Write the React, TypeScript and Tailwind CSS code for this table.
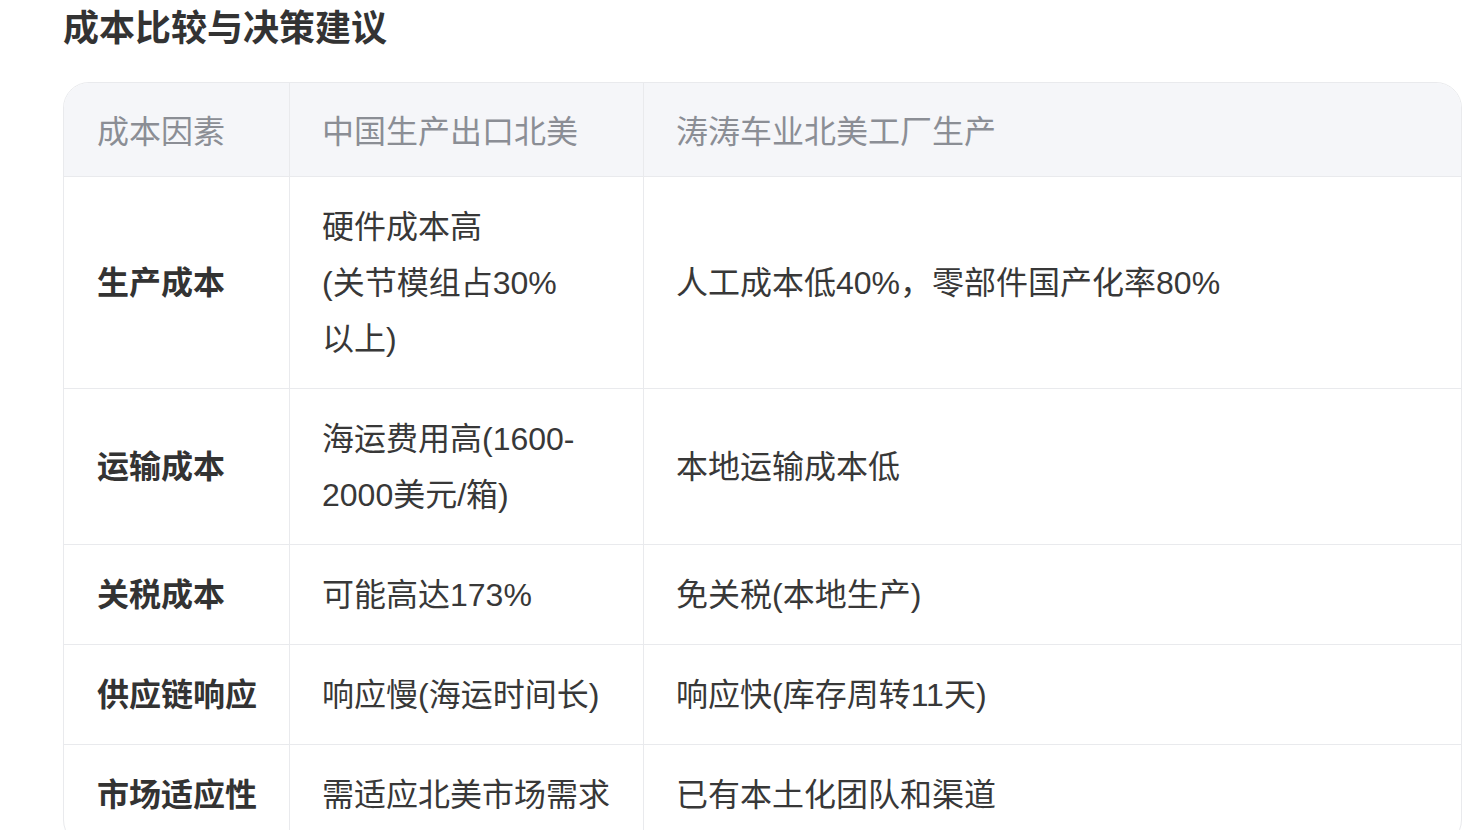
const rows = [
  {
    factor: "生产成本",
    china: (
      <>
        硬件成本高
        <br />
        (关节模组占30%
        <br />
        以上)
      </>
    ),
    local: "人工成本低40%，零部件国产化率80%",
  },
  {
    factor: "运输成本",
    china: "海运费用高(1600-2000美元/箱)",
    local: "本地运输成本低",
  },
  { factor: "关税成本", china: "可能高达173%", local: "免关税(本地生产)" },
  { factor: "供应链响应", china: "响应慢(海运时间长)", local: "响应快(库存周转11天)" },
  { factor: "市场适应性", china: "需适应北美市场需求", local: "已有本土化团队和渠道" },
];

const App = () => {
  return (
    <div
      className="min-h-screen bg-white pl-[63px] pr-[19px] text-[#333333]"
      style={{ fontFamily: '"Liberation Sans", "Noto Sans CJK SC", sans-serif' }}
    >
      <h2 className="pt-[4px] text-[36px] font-bold leading-[50px] text-[#333333]">
        成本比较与决策建议
      </h2>

      <div className="mt-[28px] overflow-hidden rounded-[26px] border border-[#e9eaed] bg-white">
        <div className="grid grid-cols-[226px_354px_1fr] text-[32px] leading-[56px]">
          <div className="border-b border-r border-[#e9eaed] bg-[#f5f6f9] pl-[33px] pt-[21px] pb-[16px] text-[#8b8e95]">
            成本因素
          </div>
          <div className="border-b border-r border-[#e9eaed] bg-[#f5f6f9] pl-[32px] pt-[21px] pb-[16px] text-[#8b8e95]">
            中国生产出口北美
          </div>
          <div className="border-b border-[#e9eaed] bg-[#f5f6f9] pl-[32px] pt-[21px] pb-[16px] text-[#8b8e95]">
            涛涛车业北美工厂生产
          </div>

          {rows.map((row) => (
            <div key={row.factor} className="contents">
              <div className="flex items-center border-b border-r border-[#e9eaed] pl-[33px] pt-[22px] pb-[21px] font-bold text-[#333333]">
                {row.factor}
              </div>
              <div className="flex items-center border-b border-r border-[#e9eaed] pl-[32px] pr-[28px] pt-[22px] pb-[21px] text-[#383838]">
                <div>{row.china}</div>
              </div>
              <div className="flex items-center border-b border-[#e9eaed] pl-[32px] pr-8 pt-[22px] pb-[21px] text-[#383838]">
                {row.local}
              </div>
            </div>
          ))}
        </div>
      </div>
    </div>
  );
};

export default App;
